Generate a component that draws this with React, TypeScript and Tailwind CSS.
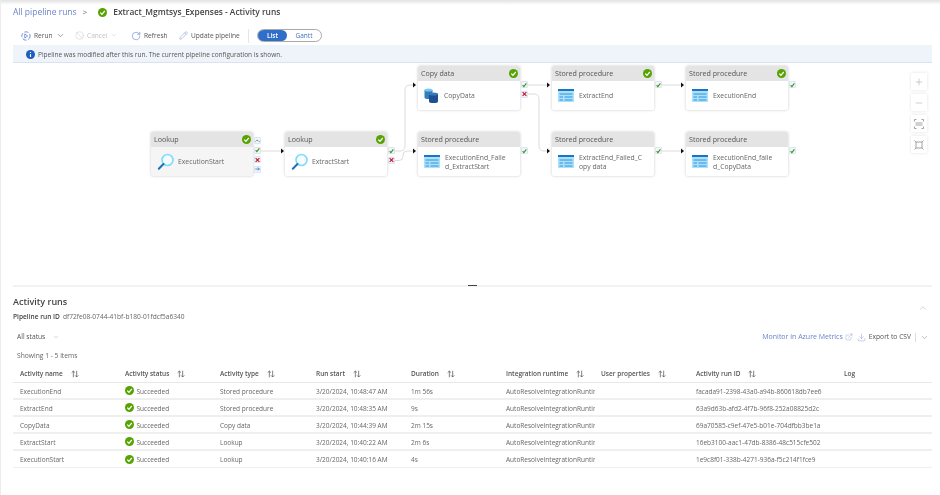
import { Ban, ChevronDown, ChevronUp, Download, ExternalLink, Minus, Pencil, Plus, RotateCw } from "lucide-react";

const activityRuns = [
  { id: 1, name: "ExecutionEnd", type: "Stored procedure", start: "3/20/2024, 10:48:47 AM", duration: "1m 56s", runId: "facada91-2398-43a0-a94b-860618db7ee6" },
  { id: 2, name: "ExtractEnd", type: "Stored procedure", start: "3/20/2024, 10:48:35 AM", duration: "9s", runId: "63a9d63b-afd2-4f7b-96f8-252a08825d2c" },
  { id: 3, name: "CopyData", type: "Copy data", start: "3/20/2024, 10:44:39 AM", duration: "2m 15s", runId: "69a70585-c9ef-47e5-b01e-704dfbb3be1a" },
  { id: 4, name: "ExtractStart", type: "Lookup", start: "3/20/2024, 10:40:22 AM", duration: "2m 6s", runId: "16eb3100-aac1-47db-8386-48c515cfe502" },
  { id: 5, name: "ExecutionStart", type: "Lookup", start: "3/20/2024, 10:40:16 AM", duration: "4s", runId: "1e9c8f01-338b-4271-936a-f5c214f1fce9" },
];

const columns = [
  { id: 1, label: "Activity name", sort: true },
  { id: 2, label: "Activity status", sort: true },
  { id: 3, label: "Activity type", sort: true },
  { id: 4, label: "Run start", sort: true },
  { id: 5, label: "Duration", sort: true },
  { id: 6, label: "Integration runtime", sort: true },
  { id: 7, label: "User properties", sort: true },
  { id: 8, label: "Activity run ID", sort: true },
  { id: 9, label: "Log", sort: false },
];

const rowGrid = "grid grid-cols-[105px_95px_96px_95px_95px_95px_95px_148px_1fr] pl-[7px] pt-[2px]";

type NodeKind = "lookup" | "copy" | "proc";
type Port = "skip" | "ok" | "fail" | "done";

const nodes: { id: number; pos: string; title: string; label: string[]; kind: NodeKind; check: boolean; selected?: boolean; ports: Port[]; portPos: string }[] = [
  { id: 1, pos: "left-[151px] top-[68px]", title: "Lookup", label: ["ExecutionStart"], kind: "lookup", check: true, selected: true, ports: ["skip", "ok", "fail", "done"], portPos: "top-[5px]" },
  { id: 2, pos: "left-[285px] top-[68px]", title: "Lookup", label: ["ExtractStart"], kind: "lookup", check: true, ports: ["ok", "fail"], portPos: "top-[15px]" },
  { id: 3, pos: "left-[418px] top-[2px]", title: "Copy data", label: ["CopyData"], kind: "copy", check: true, ports: ["ok", "fail"], portPos: "top-[15px]" },
  { id: 4, pos: "left-[418px] top-[68px]", title: "Stored procedure", label: ["ExecutionEnd_Faile", "d_ExtractStart"], kind: "proc", check: false, ports: ["ok"], portPos: "top-[15px]" },
  { id: 5, pos: "left-[552px] top-[2px]", title: "Stored procedure", label: ["ExtractEnd"], kind: "proc", check: true, ports: ["ok"], portPos: "top-[15px]" },
  { id: 6, pos: "left-[552px] top-[68px]", title: "Stored procedure", label: ["ExtractEnd_Failed_C", "opy data"], kind: "proc", check: false, ports: ["ok"], portPos: "top-[15px]" },
  { id: 7, pos: "left-[686px] top-[2px]", title: "Stored procedure", label: ["ExecutionEnd"], kind: "proc", check: true, ports: ["ok"], portPos: "top-[15px]" },
  { id: 8, pos: "left-[686px] top-[68px]", title: "Stored procedure", label: ["ExecutionEnd_faile", "d_CopyData"], kind: "proc", check: false, ports: ["ok"], portPos: "top-[15px]" },
];

const wires = [
  "M261 151H281",
  "M393 151H400Q405 151 405 146V90Q405 85 410 85H414",
  "M394 160.500H399Q403 160.500 403 156.500V155Q403 151 407 151H414",
  "M528 85H548",
  "M528 94H534Q539 94 539 99V146Q539 151 544 151H548",
  "M661 85H682",
  "M661 151H682",
];

const arrows = [417, 551, 685];

const CheckCircle = ({ size = 10 }: { size?: number }) => (
  <svg width={size} height={size} viewBox="0 0 16 16" className="shrink-0">
    <circle cx="8" cy="8" r="8" fill="#57a300" />
    <path d="M4 8.300 7 11.200 12 5.300" fill="none" stroke="#fff" strokeWidth="2.200" />
  </svg>
);

const SortIcon = () => (
  <svg width="8" height="8" viewBox="0 0 12 12" className="shrink-0 text-[#555]">
    <path d="M3.500 11V1.500M1 4 3.500 1.500 6 4M8.500 1V10.500M6 8 8.500 10.500 11 8" fill="none" stroke="currentColor" strokeWidth="1.100" />
  </svg>
);

const LookupIcon = () => (
  <svg width="18" height="18" viewBox="0 0 18 18" className="shrink-0">
    <circle cx="10.500" cy="7" r="5.500" fill="#f4fcff" stroke="#7fdcf8" strokeWidth="1.600" />
    <path d="M6.500 11 1.800 15.800" stroke="#1f6fb5" strokeWidth="2" strokeLinecap="round" />
  </svg>
);

const ProcIcon = () => (
  <svg width="16" height="13" viewBox="0 0 16 13" className="shrink-0">
    <rect x="0" y="0" width="16" height="13" fill="#a8e2fb" />
    <rect x="0" y="0" width="16" height="2" fill="#1c73c9" />
    <path d="M1.500 5H14.500M1.500 8H5M6.500 8H14.500M1.500 11H5M6.500 11H14.500" stroke="#2b86d6" strokeWidth="0.900" />
  </svg>
);

const CopyIcon = () => (
  <svg width="15" height="15" viewBox="0 0 15 15" className="shrink-0">
    <path d="M0.500 2V9.500C0.500 10.500 2.500 11 4.500 11S8.500 10.500 8.500 9.500V2Z" fill="#2f7fbe" />
    <ellipse cx="4.500" cy="2" rx="4" ry="1.500" fill="#79c9ee" />
    <path d="M5 6V13.500C5 14.500 7 15 9.500 15S14 14.500 14 13.500V6Z" fill="#1d4f91" />
    <ellipse cx="9.500" cy="6" rx="4.500" ry="1.500" fill="#3a78b8" />
  </svg>
);

const PortIcon = ({ kind }: { kind: Port }) => (
  <div className="flex h-[7px] w-[7px] items-center justify-center rounded-[1px] border border-[#dbe6f5] bg-[#f1f6fc]">
    <svg width="6" height="6" viewBox="0 0 8 8">
      {kind === "ok" && <path d="M1 4.300 3 6.500 7 1.500" fill="none" stroke="#3f8f10" strokeWidth="1.700" />}
      {kind === "fail" && <path d="M1 1 7 7M7 1 1 7" fill="none" stroke="#c8102e" strokeWidth="1.800" />}
      {kind === "skip" && <path d="M0.500 5Q3 1 5 3.500T7.500 5" fill="none" stroke="#555" strokeWidth="1" />}
      {kind === "done" && <path d="M0.500 4H7M4.500 1.500 7 4 4.500 6.500" fill="none" stroke="#1c73c9" strokeWidth="1.200" />}
    </svg>
  </div>
);

const PipelineNode = ({ node }: { node: (typeof nodes)[number] }) => {
  return (
    <div className={`absolute h-[44px] w-[102px] ${node.pos}`}>
      <div className={`h-full w-full overflow-hidden rounded-[2px] shadow-[0_0_3px_rgba(0,0,0,0.22)] ${node.selected ? "bg-[#f5f5f5]" : "bg-white"}`}>
        <div className="flex h-[15px] items-center justify-between bg-[#e4e4e4] pl-[3px] pr-[2px] text-[7.100px] text-[#555]">
          <span>{node.title}</span>
          {node.check && <CheckCircle size={9} />}
        </div>
        <div className={`flex h-[29px] items-center pl-[6px] ${node.kind === "lookup" ? "gap-[3px]" : "gap-[5px]"}`}>
          {node.kind === "lookup" && <LookupIcon />}
          {node.kind === "proc" && <ProcIcon />}
          {node.kind === "copy" && <CopyIcon />}
          <div className="text-[6.800px] leading-[9px] text-[#666]">
            {node.label.map((line) => (
              <div key={line} className="whitespace-nowrap">
                {line}
              </div>
            ))}
          </div>
        </div>
      </div>
      <div className={`absolute left-[103px] flex flex-col gap-[2.500px] ${node.portPos}`}>
        {node.ports.map((port) => (
          <PortIcon key={port} kind={port} />
        ))}
      </div>
    </div>
  );
};

const Toolbar = () => {
  return (
    <div className="ml-[21px] flex h-[21px] items-center whitespace-nowrap pt-[2px] text-[6.600px] text-[#555]">
      <div className="flex w-[54px] items-center gap-[3px]">
        <svg width="10" height="10" viewBox="0 0 12 12" className="shrink-0">
          <circle cx="6" cy="6" r="5" fill="none" stroke="#3f6fc4" strokeWidth="0.900" strokeDasharray="5 2" />
          <path d="M4.500 3.500 8 6 4.500 8.500Z" fill="none" stroke="#3f6fc4" strokeWidth="0.800" />
        </svg>
        <span>Rerun</span>
        <ChevronDown size={9} strokeWidth={1.500} />
      </div>
      <div className="flex w-[56px] items-center gap-[3px] text-[#c4c4c4]">
        <Ban size={9} strokeWidth={1.200} />
        <span>Cancel</span>
        <ChevronDown size={8} strokeWidth={1.200} />
      </div>
      <div className="flex w-[48px] items-center gap-[3px]">
        <RotateCw size={10} strokeWidth={1.200} className="text-[#3f6fc4]" />
        <span>Refresh</span>
      </div>
      <div className="flex w-[69px] items-center gap-[3px]">
        <Pencil size={9} strokeWidth={1.200} className="text-[#6f86c9]" />
        <span>Update pipeline</span>
      </div>
      <div className="h-[14px] w-px bg-[#e6e6e6]" />
      <div className="ml-[8px] flex h-[13px] w-[65px] items-center rounded-full border border-[#a9a9a9] text-[6.500px] font-semibold">
        <div className="flex h-full w-[29px] items-center justify-center rounded-full bg-[#2f6fc9] text-white">List</div>
        <div className="flex-1 text-center font-normal text-[#3f6fc4]">Gantt</div>
      </div>
    </div>
  );
};

const Canvas = () => {
  return (
    <div className="relative h-[221px]">
      <svg className="absolute inset-0" width="940" height="221" viewBox="0 64 940 221">
        {wires.map((d) => (
          <path key={d} d={d} fill="none" stroke="#dcdcdc" strokeWidth="1" />
        ))}
        <path d="M281 148.500 L284 151 L281 153.500Z" fill="#111" />
        {arrows.map((x) => (
          <g key={x}>
            <path d={`M${x - 4} 82.500 L${x - 1} 85 L${x - 4} 87.500Z`} fill="#111" />
            <path d={`M${x - 4} 148.500 L${x - 1} 151 L${x - 4} 153.500Z`} fill="#111" />
          </g>
        ))}
      </svg>
      {nodes.map((node) => (
        <PipelineNode key={node.id} node={node} />
      ))}
      <div className="absolute left-[911px] top-[9px] flex w-[16px] flex-col gap-[4px] text-[#8a8a8a]">
        <div className="flex h-[17px] items-center justify-center bg-white shadow-[0_0_3px_rgba(0,0,0,0.12)]">
          <Plus size={10} strokeWidth={1} />
        </div>
        <div className="flex h-[17px] items-center justify-center bg-white shadow-[0_0_3px_rgba(0,0,0,0.12)]">
          <Minus size={10} strokeWidth={1} />
        </div>
        <div className="flex h-[17px] items-center justify-center bg-white shadow-[0_0_3px_rgba(0,0,0,0.12)]">
          <svg width="10" height="10" viewBox="0 0 10 10">
            <path d="M0.500 2.500V0.500H2.500M7.500 0.500H9.500V2.500M0.500 7.500V9.500H2.500M7.500 9.500H9.500V7.500M1.500 4H8.500M1.500 6H8.500" fill="none" stroke="currentColor" strokeWidth="0.800" />
          </svg>
        </div>
        <div className="flex h-[17px] items-center justify-center bg-white shadow-[0_0_3px_rgba(0,0,0,0.12)]">
          <svg width="10" height="10" viewBox="0 0 10 10">
            <rect x="2" y="2" width="6" height="6" fill="none" stroke="currentColor" strokeWidth="0.800" />
            <path d="M0.500 0.500 2 2M9.500 0.500 8 2M0.500 9.500 2 8M9.500 9.500 8 8" stroke="currentColor" strokeWidth="0.800" />
          </svg>
        </div>
      </div>
    </div>
  );
};

const ActivityTable = () => {
  return (
    <div className="mx-[13px] w-[919px] text-[6.500px]">
      <div className={`${rowGrid} h-[20px] items-center border-b border-[#e8e8e8] font-semibold text-[#555]`}>
        {columns.map((col) => (
          <div key={col.id} className="flex items-center gap-[8px]">
            <span>{col.label}</span>
            {col.sort && <SortIcon />}
          </div>
        ))}
      </div>
      {activityRuns.map((run) => (
        <div key={run.id} className={`${rowGrid} h-[17px] items-center border-b-2 border-[#efefef] text-[#666] last:border-b`}>
          <div>{run.name}</div>
          <div className="flex items-center gap-[2.500px]">
            <span className="mb-[2px]">
              <CheckCircle size={9} />
            </span>
            <span>Succeeded</span>
          </div>
          <div>{run.type}</div>
          <div>{run.start}</div>
          <div>{run.duration}</div>
          <div className="w-[89px] overflow-hidden whitespace-nowrap">AutoResolveIntegrationRuntime (East US)</div>
          <div />
          <div>{run.runId}</div>
          <div />
        </div>
      ))}
    </div>
  );
};

const App = () => {
  return (
    <div className="relative h-[495px] w-[940px] overflow-hidden bg-white font-['Open_Sans',sans-serif] blur-[0.35px]">
      <div className="absolute inset-x-0 top-0 h-[5px] bg-gradient-to-b from-[#e2e2e2] to-white" />
      <div className="absolute inset-y-0 left-0 w-px bg-[#ececec]" />

      <div className="relative ml-[13px] flex h-[24px] items-center">
        <span className="text-[8.500px] text-[#6b83c9]">All pipeline runs</span>
        <span className="ml-[6px] text-[8px] text-[#666]">&gt;</span>
        <span className="ml-[11px]">
          <CheckCircle size={9} />
        </span>
        <span className="ml-[6px] text-[8.400px] font-semibold text-[#444]">Extract_Mgmtsys_Expenses - Activity runs</span>
      </div>

      <Toolbar />

      <div className="mx-[13px] mb-px flex h-[18px] w-[919px] items-center gap-[3px] border-b border-[#d9e2f2] bg-[#eff4fb] pl-[13px] pt-[2px] text-[6.500px] text-[#555]">
        <svg width="9" height="9" viewBox="0 0 16 16" className="shrink-0">
          <circle cx="8" cy="8" r="8" fill="#1c5fc0" />
          <path d="M8 7V12.500M8 3.500V5.200" stroke="#fff" strokeWidth="2" />
        </svg>
        <span>Pipeline was modified after this run. The current pipeline configuration is shown.</span>
      </div>

      <Canvas />

      <div className="relative mx-[13px] h-[2px] w-[919px] bg-[#f2f2f2]">
        <div className="absolute left-[455px] top-0 h-px w-[9px] bg-[#444]" />
      </div>

      <div className="mx-[13px] mt-[7px] flex h-[16px] w-[919px] items-center justify-between">
        <span className="text-[9px] font-semibold text-[#444]">Activity runs</span>
        <ChevronUp size={10} strokeWidth={1} className="mr-[4px] mt-[11px] text-[#999]" />
      </div>

      <div className="mx-[13px] flex h-[14px] items-center gap-[3px] text-[6.600px] text-[#666]">
        <span className="font-semibold text-[#444]">Pipeline run ID</span>
        <span>df72fe08-0744-41bf-b180-01fdcf5a6340</span>
      </div>

      <div className="mx-[13px] mt-[4px] flex h-[18px] w-[919px] items-center justify-between pl-[4px] text-[6.700px] text-[#555]">
        <div className="flex items-center gap-[7px]">
          <span>All status</span>
          <ChevronDown size={8} strokeWidth={1} className="text-[#888]" />
        </div>
        <div className="flex items-center">
          <span className="text-[7px] text-[#6b83c9]">Monitor in Azure Metrics</span>
          <ExternalLink size={8} strokeWidth={1} className="ml-[2px] text-[#6b83c9]" />
          <Download size={9} strokeWidth={1} className="ml-[4px] text-[#6b83c9]" />
          <span className="ml-[3px]">Export to CSV</span>
          <div className="ml-[4px] h-[9px] w-px bg-[#ddd]" />
          <ChevronDown size={9} strokeWidth={1} className="ml-[4px] mr-[3px]" />
        </div>
      </div>

      <div className="mx-[13px] mt-[3px] flex h-[14px] items-center pl-[4px] text-[6.700px] text-[#666]">Showing 1 - 5 items</div>

      <ActivityTable />
    </div>
  );
};

export default App;
